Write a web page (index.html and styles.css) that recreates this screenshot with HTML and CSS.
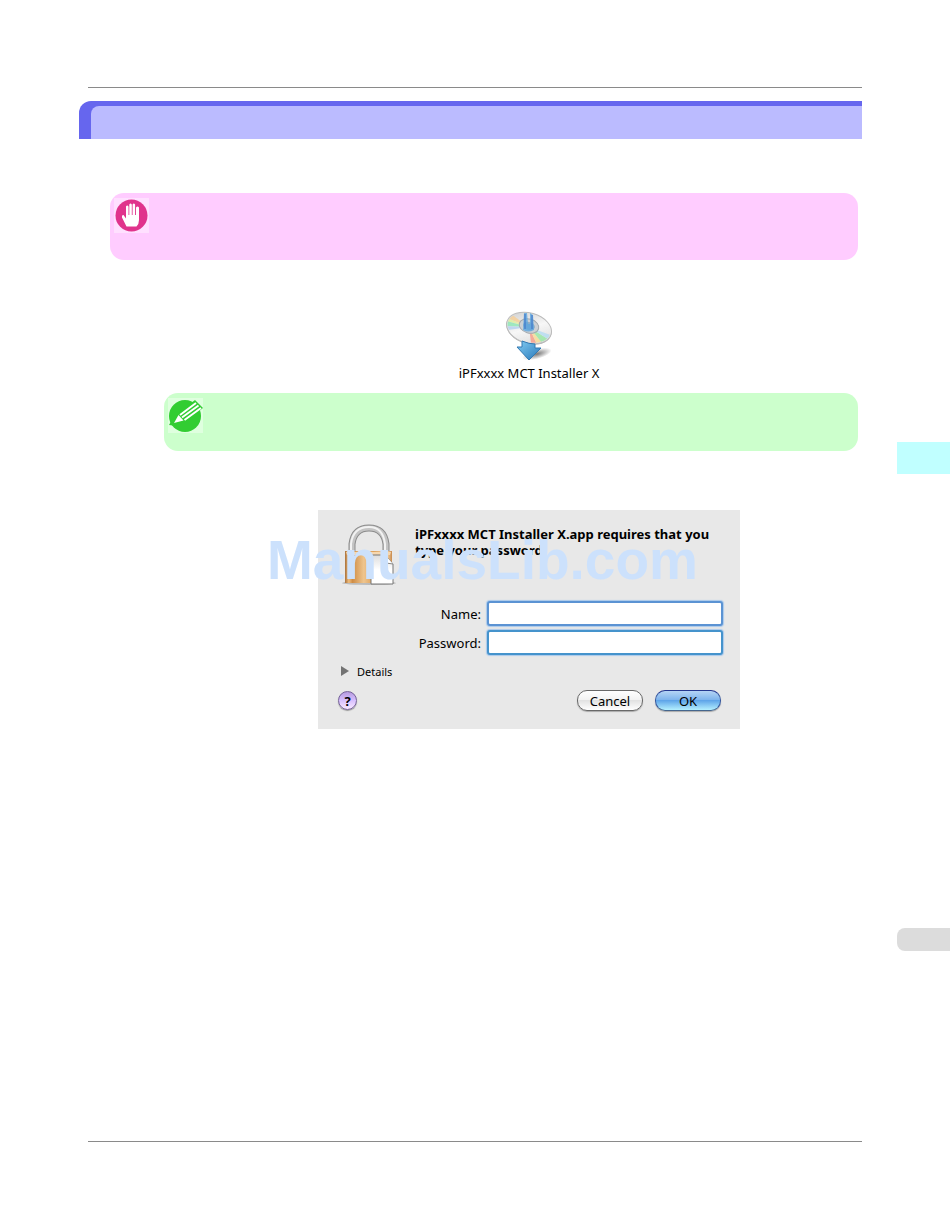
FILE: index.html
```
<!DOCTYPE html>
<html lang="en">
<head>
    <meta charset="UTF-8">
    <meta name="viewport" content="width=device-width, initial-scale=1.0">
    <title>iPFxxxx MCT Installer X</title>
    <link rel="stylesheet" href="styles.css">
</head>
<body>
    <main class="page">
        <hr class="rule">
        <div class="heading"><div class="heading-inner"></div></div>

        <div class="note important">
            <svg class="note-icon" viewBox="0 0 35 35" aria-hidden="true">
                <rect width="35" height="35" fill="#ffe0ff"/>
                <circle cx="17.500" cy="17.500" r="16" fill="#e0338c"/>
                <path d="M12.500 28.500 L8 19.500 Q7.500 16.500 9.500 17 L12 20.500 V8.500 Q13.200 6.500 14.500 8.500 V17 H15.300 V6.500 Q16.500 4.500 17.800 6.500 V17 H18.600 V6.500 Q19.800 4.500 21.100 6.500 V17 H22 V9.500 Q23.500 7.500 25 9.500 V22 Q25 26 22.500 28.500 Z" fill="#fff"/>
            </svg>
        </div>

        <figure class="installer">
            <svg width="50" height="50" viewBox="0 0 50 50" aria-hidden="true">
                <defs>
                    <linearGradient id="disc" x1="0" y1="0" x2="1" y2="1">
                        <stop offset="0" stop-color="#c9c9c9"/>
                        <stop offset="0.500" stop-color="#f7f7f7"/>
                        <stop offset="1" stop-color="#d4d4d4"/>
                    </linearGradient>
                    <linearGradient id="arrow" x1="0" y1="0" x2="1" y2="1">
                        <stop offset="0" stop-color="#83cdf3"/>
                        <stop offset="1" stop-color="#2676b8"/>
                    </linearGradient>
                    <radialGradient id="shade">
                        <stop offset="0" stop-color="#777"/>
                        <stop offset="1" stop-color="#777" stop-opacity="0"/>
                    </radialGradient>
                    <clipPath id="disc-edge">
                        <ellipse cx="25" cy="17" rx="22" ry="14" transform="rotate(16 25 17)"/>
                    </clipPath>
                </defs>
                <ellipse cx="33" cy="43" rx="15" ry="5" fill="url(#shade)" transform="rotate(-15 33 43)"/>
                <ellipse cx="25" cy="18" rx="23" ry="15" fill="#b5b5b5" transform="rotate(16 25 18)"/>
                <ellipse cx="25" cy="17" rx="23" ry="15" fill="url(#disc)" stroke="#bbb" transform="rotate(16 25 17)"/>
                <g clip-path="url(#disc-edge)" opacity="0.800">
                    <path d="M25 16 L0 -2 L-2 5 Z" fill="#f7cf95"/>
                    <path d="M25 16 L-2 5 L-2 9 Z" fill="#e2f09a"/>
                    <path d="M25 16 L-2 9 L-2 15 Z" fill="#8ce8b5"/>
                    <path d="M25 16 L-2 15 L-2 20 Z" fill="#b3d0f0"/>
                    <path d="M25 16 L28 40 L36 40 Z" fill="#f79c86"/>
                    <path d="M25 16 L36 40 L43 38 Z" fill="#f8dc91"/>
                    <path d="M25 16 L43 38 L50 32 Z" fill="#97e8a3"/>
                    <path d="M25 16 L50 32 L52 26 Z" fill="#b5dcf2"/>
                </g>
                <ellipse cx="25" cy="15" rx="10" ry="7" fill="#ccd0d4" stroke="#a3a9ae" transform="rotate(16 25 15)"/>
                <ellipse cx="25" cy="15" rx="6" ry="4" fill="#8eacc5" transform="rotate(16 25 15)"/>
                <path d="M20 2 L19 19 Q24 22 30 19 L29 4 L26 2 L26 13 L24 13 L23 2 Z" fill="#5da6df" opacity="0.800"/>
                <path d="M21 3 V18 M28 4 V18" stroke="#3b6fc4" fill="none"/>
                <path d="M18 30 Q25 33 31 33 V37 H37 L25 49 L13 36 H18 Z" fill="url(#arrow)" stroke="#3279b2"/>
            </svg>
            <figcaption>iPFxxxx MCT Installer X</figcaption>
        </figure>

        <div class="note tip">
            <svg class="note-icon" viewBox="0 0 35 35" aria-hidden="true">
                <rect width="35" height="35" fill="#dfffdf"/>
                <circle cx="17" cy="18" r="16" fill="#32cd32"/>
                <path d="M1 27 L5 20 L9 28 Z" fill="#32cd32"/>
                <path d="M5 26 L10 15 L27 2 L35 10 L17 24 Z" fill="#32cd32"/>
                <path d="M6 25 L10.500 17 L15.500 22.500 Z" fill="#fff"/>
                <path d="M12 17 L28 5 M14 19.500 L30.500 7.500 M16.500 22 L33 10" stroke="#fff" stroke-width="2" fill="none"/>
            </svg>
        </div>

        <form class="dialog">
            <div class="dialog-head">
                <svg class="lock" viewBox="0 0 56 64" aria-hidden="true">
                    <defs>
                        <linearGradient id="brass">
                            <stop offset="0" stop-color="#a9713b"/>
                            <stop offset="0.080" stop-color="#f0bd7c"/>
                            <stop offset="0.160" stop-color="#cf8d46"/>
                            <stop offset="0.400" stop-color="#efc58e"/>
                            <stop offset="0.600" stop-color="#dda05a"/>
                            <stop offset="0.900" stop-color="#f5d1a4"/>
                            <stop offset="1" stop-color="#c98b4c"/>
                        </linearGradient>
                        <linearGradient id="paper" x1="0" y1="0" x2="0" y2="1">
                            <stop offset="0" stop-color="#dcdcdc"/>
                            <stop offset="0.500" stop-color="#ffffff"/>
                        </linearGradient>
                    </defs>
                    <ellipse cx="27" cy="61" rx="27" ry="2" fill="#bbb"/>
                    <path d="M10 31 V22 Q12 6 27 6 Q42 6 44 22 V31" fill="none" stroke="#8c8c8c" stroke-width="7"/>
                    <path d="M10 31 V22 Q12 6 27 6 Q42 6 44 22 V31" fill="none" stroke="#c4c4c4" stroke-width="5"/>
                    <path d="M9 31 V22 Q11 5 27 5 Q41 5 43 22 V31" fill="none" stroke="#f2f2f2" stroke-width="2"/>
                    <rect x="3" y="29" width="47" height="32" fill="url(#brass)"/>
                    <path d="M4 30 H49 L48 33 H5 Z" fill="#f6d7af"/>
                    <path d="M29 33 H43 L51 42 V62 H29 Z" fill="url(#paper)" stroke="#777"/>
                    <path d="M43 33 L44 41 L51 42" fill="#fff" stroke="#888"/>
                </svg>
                <p class="message">iPFxxxx MCT Installer X.app requires that you type your password.</p>
            </div>
            <div class="fields">
                <label for="name">Name:</label>
                <input type="text" id="name" name="name">
                <label for="password">Password:</label>
                <input type="password" id="password" name="password">
            </div>
            <button type="button" class="details">
                <svg width="8" height="10" viewBox="0 0 8 10" aria-hidden="true"><path d="M0 0 L8 5 L0 10 Z" fill="#737373"/></svg>
                Details
            </button>
            <div class="actions">
                <button type="button" class="help">?</button>
                <button type="button" class="push cancel">Cancel</button>
                <button type="submit" class="push ok">OK</button>
            </div>
            <div class="watermark">ManualsLib.com</div>
        </form>

        <hr class="rule bottom">
    </main>

    <aside class="tabs">
        <div class="tab chapter"></div>
        <div class="tab page-number"></div>
    </aside>
</body>
</html>
```
FILE: styles.css
```
* {
    box-sizing: border-box;
}

body {
    display: flex;
    min-height: 100vh;
    margin: 0;
    background-color: #fff;
    color: #000;
    font-family: "Noto Sans", "Open Sans", sans-serif;
    font-size: 13px;
}

.page {
    flex: 1;
    display: flex;
    flex-direction: column;
    padding: 87px 35px 87px 79px;
}

.rule {
    width: auto;
    height: 1px;
    margin: 0 0 0 9px;
    border: none;
    background-color: #8a8a8a;
}

.rule.bottom {
    margin-top: auto;
}

.heading {
    height: 38px;
    margin-top: 13px;
    padding: 5px 0 0 12px;
    border-top-left-radius: 12px;
    background-color: #6666ee;
}

.heading-inner {
    height: 100%;
    border-top-left-radius: 8px;
    background-color: #bbbbff;
}

.note {
    margin-right: 4px;
    padding: 5px 4px;
    border-radius: 14px;
}

.note-icon {
    display: block;
    width: 35px;
    height: 35px;
}

.important {
    height: 67px;
    margin-top: 54px;
    margin-left: 31px;
    background-color: #ffccff;
}

.tip {
    height: 58px;
    margin-left: 85px;
    background-color: #ccffcc;
}

.installer {
    margin: 51px 4px 10px 121px;
    text-align: center;
}

.installer svg {
    display: block;
    margin: 0 auto 2px;
}

.installer figcaption {
    line-height: 20px;
}

.dialog {
    position: relative;
    align-self: center;
    width: 422px;
    margin: 59px 4px 0 121px;
    padding: 12px 17px 18px 24px;
    background-color: #e8e8e8;
}

.dialog-head {
    display: flex;
    gap: 17px;
}

.lock {
    width: 56px;
    height: 64px;
}

.message {
    flex: 1;
    margin: 4px 0 0;
    font-weight: bold;
    line-height: 16px;
}

.fields {
    display: grid;
    grid-template-columns: 1fr 236px;
    gap: 4px 6px;
    align-items: center;
    margin-top: 15px;
    text-align: right;
}

.fields input {
    height: 25px;
    padding: 0 4px;
    border: 2px solid #5b93d3;
    border-radius: 3px;
    outline: none;
    background-color: #fff;
    box-shadow: 0 0 1px 1px #a9c9ec;
    font: inherit;
}

.fields #password {
    border-color: #4593cc;
}

button {
    padding: 0;
    border: none;
    color: #000;
    font-family: inherit;
    cursor: pointer;
}

.details {
    display: flex;
    align-items: center;
    gap: 8px;
    height: 16px;
    margin-top: 8px;
    margin-left: -1px;
    background: none;
    font-size: 11px;
}

.actions {
    display: flex;
    align-items: center;
    gap: 12px;
    margin: 11px 2px 0 -4px;
}

.help {
    width: 19px;
    height: 19px;
    margin-right: auto;
    border: 1px solid #75619a;
    border-radius: 50%;
    background: linear-gradient(#b59adf, #d8c0ff 50%, #f8e8ff);
    box-shadow: 0 1px 1px #999;
    font-size: 13px;
    font-weight: bold;
    line-height: 16px;
}

.push {
    width: 66px;
    height: 21px;
    border: 1px solid #696969;
    border-radius: 10px;
    box-shadow: 0 1px 1px #aaa;
    font-size: 13px;
    line-height: 18px;
}

.cancel {
    background: linear-gradient(#fff, #f3f3f3 45%, #e2e2e2 50%, #fff);
}

.ok {
    border-color: #24378f #37589e #45668d;
    background: linear-gradient(#b5d4f5, #80b5ed 45%, #5fa5e9 50%, #b4f0ff);
}

/* sits across the dialog and spills over its left edge */
.watermark {
    position: absolute;
    top: 18px;
    left: -51px;
    color: #cce1fc;
    font-family: "Liberation Sans", Arial, sans-serif;
    font-size: 55px;
    font-weight: bold;
    line-height: 64px;
    white-space: nowrap;
    pointer-events: none;
}

.tabs {
    display: flex;
    flex-direction: column;
    gap: 454px;
    width: 53px;
    padding-top: 442px;
}

.chapter {
    height: 32px;
    background-color: #c0ffff;
}

.page-number {
    height: 23px;
    border-radius: 8px 0 0 8px;
    background-color: #dcdcdc;
}
```
